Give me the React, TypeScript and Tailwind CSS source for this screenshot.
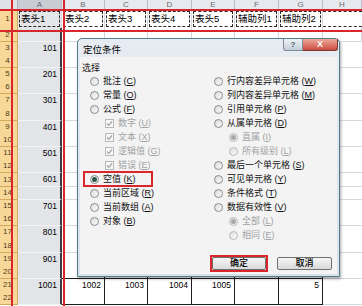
import React from 'react';

const COLS = ['A', 'B', 'C', 'D', 'E', 'F', 'G', 'H'];
const GRID = 'grid grid-cols-[18px_44px_43px_43px_44px_43px_44px_44px_1fr]';
const HEADS = ['表头1', '表头2', '表头3', '表头4', '表头5', '辅助列1', '辅助列2'];
const LAST = ['1002', '1003', '1004', '1005', '', '5'];

const bodyRows = Array.from({ length: 20 }, (_, i) => {
  const n = i + 3;
  return {
    n,
    h: n === 8 || n === 13 || n === 18 ? 'h-[14px]' : 'h-[13px]',
    a: n % 2 === 1 ? String(((n - 1) / 2) * 100 + 1) : '',
  };
});

interface Item {
  label: string;
  k: string;
  kind: 'radio' | 'check';
  sub?: boolean;
  checked?: boolean;
  disabled?: boolean;
  mark?: boolean;
}

const LEFT: Item[] = [
  { label: '批注', k: 'C', kind: 'radio' },
  { label: '常量', k: 'O', kind: 'radio' },
  { label: '公式', k: 'F', kind: 'radio' },
  { label: '数字', k: 'U', kind: 'check', sub: true, checked: true, disabled: true },
  { label: '文本', k: 'X', kind: 'check', sub: true, checked: true, disabled: true },
  { label: '逻辑值', k: 'G', kind: 'check', sub: true, checked: true, disabled: true },
  { label: '错误', k: 'E', kind: 'check', sub: true, checked: true, disabled: true },
  { label: '空值', k: 'K', kind: 'radio', checked: true, mark: true },
  { label: '当前区域', k: 'R', kind: 'radio' },
  { label: '当前数组', k: 'A', kind: 'radio' },
  { label: '对象', k: 'B', kind: 'radio' },
];

const RIGHT: Item[] = [
  { label: '行内容差异单元格', k: 'W', kind: 'radio' },
  { label: '列内容差异单元格', k: 'M', kind: 'radio' },
  { label: '引用单元格', k: 'P', kind: 'radio' },
  { label: '从属单元格', k: 'D', kind: 'radio' },
  { label: '直属', k: 'I', kind: 'radio', sub: true, checked: true, disabled: true },
  { label: '所有级别', k: 'L', kind: 'radio', sub: true, disabled: true },
  { label: '最后一个单元格', k: 'S', kind: 'radio' },
  { label: '可见单元格', k: 'Y', kind: 'radio' },
  { label: '条件格式', k: 'T', kind: 'radio' },
  { label: '数据有效性', k: 'V', kind: 'radio' },
  { label: '全部', k: 'L', kind: 'radio', sub: true, checked: true, disabled: true },
  { label: '相同', k: 'E', kind: 'radio', sub: true, disabled: true },
];

function RowHead({ n }: { n: number }) {
  return (
    <div className="flex items-center justify-center border-r border-b border-[#d3a95c] bg-[#f8d898] pr-[2px] text-[8px] text-[#4a3c22]">
      {n}
    </div>
  );
}

function Radio({ checked, disabled }: { checked?: boolean; disabled?: boolean }) {
  return (
    <span
      className={`flex h-[9px] w-[9px] shrink-0 items-center justify-center rounded-full border bg-linear-to-br from-[#dcdcdc] to-[#fbfbfb] ${
        disabled ? 'border-[#b9b9b9]' : 'border-[#8a8c8e]'
      }`}
    >
      {checked && (
        <span className={`h-[5px] w-[5px] rounded-full ${disabled ? 'bg-[#a8a8a8]' : 'bg-[#2c5a4a]'}`} />
      )}
    </span>
  );
}

function Check() {
  return (
    <span className="flex h-[9px] w-[9px] shrink-0 items-center justify-center border border-[#b9b9b9] bg-[#f7f7f7]">
      <svg width="7" height="7" viewBox="0 0 7 7">
        <path d="M1 3.5 L2.8 5.3 L6 1.5" fill="none" stroke="#a5a5a5" strokeWidth="1.2" />
      </svg>
    </span>
  );
}

function Option({ item }: { item: Item }) {
  return (
    <div className={`relative flex h-[14px] items-center gap-[4px] ${item.sub ? 'pl-[15px]' : ''}`}>
      {item.kind === 'radio' ? <Radio checked={item.checked} disabled={item.disabled} /> : <Check />}
      <span className={`whitespace-nowrap ${item.disabled ? 'text-[#a3a3a3]' : 'text-[#111]'}`}>
        {item.label} (<span className="underline">{item.k}</span>)
      </span>
      {item.mark && (
        <span className="absolute -left-[7px] -top-[1px] h-[16px] w-[70px] border-2 border-[#d9262b]" />
      )}
    </div>
  );
}

function Sheet() {
  return (
    <div className="flex flex-col">
      <div className={`${GRID} h-[10px]`}>
        <div className="border-r border-b border-[#aab6c3] bg-[#dfe3e8]" />
        {COLS.map((c, i) => (
          <div
            key={c}
            className={`flex items-start justify-center overflow-hidden border-r border-b border-[#b6bfca] text-[8px] leading-[9px] text-[#666b72] ${
              i === 0 ? 'bg-[#c9cdd3]' : 'bg-[#e6e9ed]'
            }`}
          >
            {c}
          </div>
        ))}
      </div>

      <div className={`${GRID} h-[18px]`}>
        <RowHead n={1} />
        {HEADS.map((t, i) => (
          <div
            key={t}
            className={`border-r border-b border-[#d4d9e1] p-[1px] ${i === 0 ? 'bg-[#e4e6ea]' : 'bg-white'}`}
          >
            <div className="h-full border border-dashed border-[#2b2b2b] pl-[1px] text-[9.5px] leading-[14px] text-black">
              {t}
            </div>
          </div>
        ))}
        <div className="border-b border-[#d4d9e1] py-[1px]">
          <div className="h-full border-y border-dashed border-[#2b2b2b]" />
        </div>
      </div>

      <div className={`${GRID} h-[14px]`}>
        <RowHead n={2} />
        <div className="border-b border-b-[#f3f3f3] border-r-2 border-r-[#3d3d3d] bg-[#e2e4e8]" />
        {COLS.slice(1).map((c) => (
          <div key={c} className="border-r border-b border-[#d4d9e1] bg-white" />
        ))}
      </div>

      {bodyRows.map((r) => (
        <div key={r.n} className={`${GRID} ${r.h}`}>
          <RowHead n={r.n} />
          <div className="flex items-center justify-end border-b border-b-[#f3f3f3] border-r-2 border-r-[#3d3d3d] bg-[#e2e4e8] pr-[3px] text-[8.5px] text-black">
            {r.a}
          </div>
          {COLS.slice(1, 7).map((c, i) => (
            <div
              key={c}
              className={`flex items-center justify-end border-r border-b bg-white pr-[3px] text-[8.5px] text-black ${
                r.n >= 20 ? 'border-[#1e1e1e]' : 'border-[#d4d9e1]'
              }`}
            >
              {r.n === 21 ? LAST[i] : ''}
            </div>
          ))}
          <div className="border-b border-[#d4d9e1] bg-white" />
        </div>
      ))}
    </div>
  );
}

function Dialog() {
  return (
    <div className="absolute left-[77px] top-[38px] flex h-[239px] w-[263px] flex-col rounded-t-[5px] border border-[#557c8a] bg-linear-to-b from-[#e6ecf2] to-[#d9e1e9] shadow-[1px_2px_3px_rgba(0,0,0,0.35)]">
      <div className="flex h-[18px] items-start justify-between">
        <span className="pl-[5px] pt-[5px] text-[9.5px] leading-[11px] text-black">定位条件</span>
        <div className="flex pr-[1px]">
          <div className="flex h-[12px] w-[20px] items-center justify-center rounded-bl-[3px] border border-t-0 border-[#7d8b99] bg-linear-to-b from-[#eef2f6] to-[#c3ced9] text-[8px] font-bold text-[#4d5866]">
            ?
          </div>
          <div className="flex h-[12px] w-[35px] items-center justify-center rounded-br-[3px] border border-t-0 border-l-0 border-[#7a3a32] bg-linear-to-b from-[#eba89a] to-[#c94a3e] text-[9px] font-bold leading-none text-white">
            X
          </div>
        </div>
      </div>

      <div className="mx-[2px] mb-[2px] flex flex-1 flex-col bg-[#f3f3f3] text-[9px] leading-[12px]">
        <div className="mt-[5px] h-[12px] pl-[2px] text-[#111]">选择</div>
        <div className="flex">
          <div className="w-[134px] pl-[10px]">
            {LEFT.map((it) => (
              <Option key={it.label} item={it} />
            ))}
          </div>
          <div className="flex-1">
            {RIGHT.map((it) => (
              <Option key={it.label} item={it} />
            ))}
          </div>
        </div>
        <div className="mt-auto mb-[2px] flex h-[17px] items-center justify-end gap-[9px] pr-[5px]">
          <div className="border-2 border-[#d9262b]">
            <div className="flex h-[13px] w-[54px] items-center justify-center rounded-[2px] border border-[#707070] bg-linear-to-b from-[#f6f6f6] to-[#d9d9d9] text-[9px] font-medium leading-none text-black">
              确定
            </div>
          </div>
          <div className="flex h-[13px] w-[55px] items-center justify-center rounded-[2px] border border-[#707070] bg-linear-to-b from-[#f6f6f6] to-[#d9d9d9] text-[9px] font-medium leading-none text-black">
            取消
          </div>
        </div>
      </div>
    </div>
  );
}

export default function App() {
  return (
    <div className="relative h-[306px] w-[362px] overflow-hidden bg-white font-['Liberation_Sans','Noto_Sans_CJK_SC',sans-serif]">
      <Sheet />

      {/* red guide lines */}
      <div className="absolute left-0 right-0 top-[9px] h-[2px] bg-[#d8262c]" />
      <div className="absolute left-0 right-0 top-[30px] h-[2px] bg-[#d8262c]" />
      <div className="absolute bottom-0 top-0 left-[11px] w-[2px] bg-[#d8262c]" />
      <div className="absolute bottom-0 top-0 left-[63px] w-[2px] bg-[#d8262c]" />

      <Dialog />
    </div>
  );
}
